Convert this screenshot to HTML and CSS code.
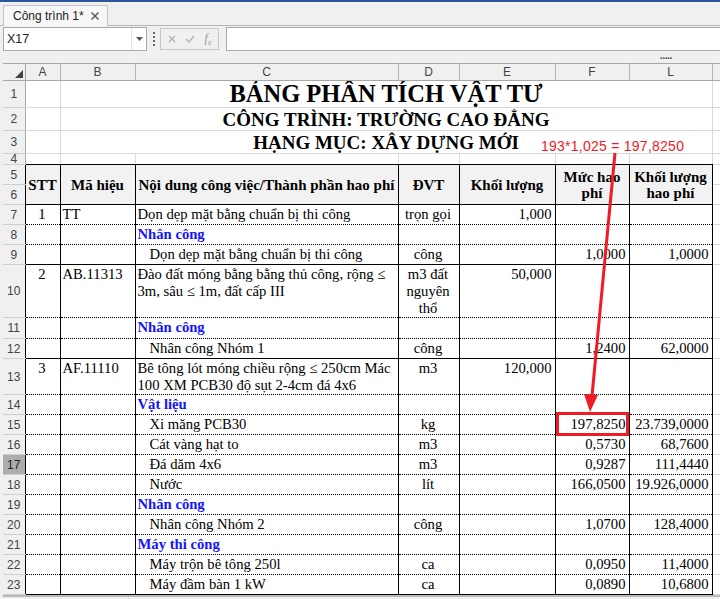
FILE: index.html
```html
<!DOCTYPE html>
<html lang="vi">
<head>
<meta charset="utf-8">
<title>Công trình 1*</title>
<link rel="stylesheet" href="styles.css">
</head>
<body>
<div class="app">
  <div class="topline"></div>
  <div class="tabbar">
    <div class="tab">
      <span class="tab-label">Công trình 1*</span>
      <svg class="tab-close" width="8" height="8" viewBox="0 0 8 8"><path d="M0.5 0.5 L7.5 7.5 M7.5 0.5 L0.5 7.5" stroke="#555" stroke-width="1.4"/></svg>
    </div>
  </div>
  <div class="fbar">
    <div class="namebox">
      <span class="name">X17</span>
      <span class="drop"><svg width="7" height="4" viewBox="0 0 7 4"><path d="M0 0 H7 L3.5 4 Z" fill="#555"/></svg></span>
    </div>
    <div class="grip"><i></i><i></i><i></i><i></i></div>
    <div class="fbtns">
      <svg width="8" height="8" viewBox="0 0 8 8"><path d="M1 1 L7 7 M7 1 L1 7" stroke="#b0b0b0" stroke-width="1.2"/></svg>
      <svg width="10" height="8" viewBox="0 0 10 8"><path d="M1 4 L4 7 L9 1" stroke="#b0b0b0" stroke-width="1.2" fill="none"/></svg>
      <span class="fx">f<sub>x</sub></span>
    </div>
    <div class="finput"></div>
  </div>
  <div class="strip"><span class="dots">.....</span></div>
  <div class="sheetwrap">
    <table class="sheet">
      <colgroup>
        <col class="c-rh"><col class="c-a"><col class="c-b"><col class="c-c"><col class="c-d"><col class="c-e"><col class="c-f"><col class="c-l"><col class="c-x">
      </colgroup>
      <thead>
        <tr class="colhdr">
          <th class="corner"><svg width="8" height="8" viewBox="0 0 8 8"><path d="M8 0 V8 H0 Z" fill="#444"/></svg></th>
          <th>A</th><th>B</th><th>C</th><th>D</th><th>E</th><th>F</th><th>L</th><th></th>
        </tr>
      </thead>
      <tbody>
        <tr class="h27"><th class="rh">1</th><td class="g"></td><td class="g title t1" colspan="6">BẢNG PHÂN TÍCH VẬT TƯ</td><td class="g"></td></tr>
        <tr class="h23"><th class="rh">2</th><td class="g"></td><td class="g title t2" colspan="6">CÔNG TRÌNH: TRƯỜNG CAO ĐẲNG</td><td class="g"></td></tr>
        <tr class="h23"><th class="rh">3</th><td class="g"></td><td class="g title t2" colspan="6">HẠNG MỤC: XÂY DỰNG MỚI</td><td class="g"></td></tr>
        <tr class="h11"><th class="rh">4</th><td class="g4"></td><td class="g4"></td><td class="g4"></td><td class="g4"></td><td class="g4"></td><td class="g4"></td><td class="g4"></td><td class="g"></td></tr>

        <tr class="h20 hd"><th class="rh rd">5</th>
          <td class="hc" rowspan="2">STT</td><td class="hc" rowspan="2">Mã hiệu</td><td class="hc" rowspan="2">Nội dung công việc/Thành phần hao phí</td><td class="hc" rowspan="2">ĐVT</td><td class="hc" rowspan="2">Khối lượng</td><td class="hc" rowspan="2">Mức hao<br>phí</td><td class="hc" rowspan="2">Khối lượng<br>hao phí</td><td class="g"></td></tr>
        <tr class="h20"><th class="rh rd">6</th><td class="g"></td></tr>

        <tr class="h20 dot"><th class="rh rd">7</th><td class="ctr">1</td><td>TT</td><td>Dọn dẹp mặt bằng chuẩn bị thi công</td><td class="ctr">trọn gọi</td><td class="num">1,000</td><td></td><td></td><td class="g"></td></tr>
        <tr class="h20 dot"><th class="rh rd">8</th><td></td><td></td><td class="grp">Nhân công</td><td></td><td></td><td></td><td></td><td class="g"></td></tr>
        <tr class="h20 sol"><th class="rh rd">9</th><td></td><td></td><td class="ind">Dọn dẹp mặt bằng chuẩn bị thi công</td><td class="ctr">công</td><td></td><td class="num">1,0000</td><td class="num">1,0000</td><td class="g"></td></tr>
        <tr class="h53 dot"><th class="rh rd">10</th><td class="ctr">2</td><td>AB.11313</td><td>Đào đất móng bằng bằng thủ công, rộng ≤<br>3m, sâu ≤ 1m, đất cấp III</td><td class="ctr">m3 đất<br>nguyên<br>thổ</td><td class="num">50,000</td><td></td><td></td><td class="g"></td></tr>
        <tr class="h21 dot"><th class="rh rd">11</th><td></td><td></td><td class="grp">Nhân công</td><td></td><td></td><td></td><td></td><td class="g"></td></tr>
        <tr class="h20 sol"><th class="rh rd">12</th><td></td><td></td><td class="ind">Nhân công Nhóm 1</td><td class="ctr">công</td><td></td><td class="num">1,2400</td><td class="num">62,0000</td><td class="g"></td></tr>
        <tr class="h36 dot"><th class="rh rd">13</th><td class="ctr">3</td><td>AF.11110</td><td>Bê tông lót móng chiều rộng ≤ 250cm Mác<br>100 XM PCB30 độ sụt 2-4cm đá 4x6</td><td class="ctr">m3</td><td class="num">120,000</td><td></td><td></td><td class="g"></td></tr>
        <tr class="h20 dot"><th class="rh rd">14</th><td></td><td></td><td class="grp">Vật liệu</td><td></td><td></td><td></td><td></td><td class="g"></td></tr>
        <tr class="h20 dot"><th class="rh rd">15</th><td></td><td></td><td class="ind">Xi măng PCB30</td><td class="ctr">kg</td><td></td><td class="num">197,8250</td><td class="num">23.739,0000</td><td class="g"></td></tr>
        <tr class="h20 dot"><th class="rh rd">16</th><td></td><td></td><td class="ind">Cát vàng hạt to</td><td class="ctr">m3</td><td></td><td class="num">0,5730</td><td class="num">68,7600</td><td class="g"></td></tr>
        <tr class="h20 dot"><th class="rh rd sel">17</th><td></td><td></td><td class="ind">Đá dăm 4x6</td><td class="ctr">m3</td><td></td><td class="num">0,9287</td><td class="num">111,4440</td><td class="g"></td></tr>
        <tr class="h20 dot"><th class="rh rd">18</th><td></td><td></td><td class="ind">Nước</td><td class="ctr">lít</td><td></td><td class="num">166,0500</td><td class="num">19.926,0000</td><td class="g"></td></tr>
        <tr class="h20 dot"><th class="rh rd">19</th><td></td><td></td><td class="grp">Nhân công</td><td></td><td></td><td></td><td></td><td class="g"></td></tr>
        <tr class="h20 dot"><th class="rh rd">20</th><td></td><td></td><td class="ind">Nhân công Nhóm 2</td><td class="ctr">công</td><td></td><td class="num">1,0700</td><td class="num">128,4000</td><td class="g"></td></tr>
        <tr class="h20 dot"><th class="rh rd">21</th><td></td><td></td><td class="grp">Máy thi công</td><td></td><td></td><td></td><td></td><td class="g"></td></tr>
        <tr class="h20 dot"><th class="rh rd">22</th><td></td><td></td><td class="ind">Máy trộn bê tông 250l</td><td class="ctr">ca</td><td></td><td class="num">0,0950</td><td class="num">11,4000</td><td class="g"></td></tr>
        <tr class="h20 sol"><th class="rh rd">23</th><td></td><td></td><td class="ind">Máy đầm bàn 1 kW</td><td class="ctr">ca</td><td></td><td class="num">0,0890</td><td class="num">10,6800</td><td class="g"></td></tr>
      </tbody>
    </table>
    <div class="sheetfoot"></div>
  </div>

  <div class="annot">193*1,025 = 197,8250</div>
  <svg class="arrow" width="720" height="599" viewBox="0 0 720 599">
    <path d="M615 153 L592 396" stroke="#ee1c24" stroke-width="3" fill="none"/>
    <path d="M584 394 L598 395 L590 412 Z" fill="#ee1c24"/>
  </svg>
  <div class="hilite"></div>
</div>
</body>
</html>
```

FILE: styles.css
```css
html, body {
  margin: 0;
  padding: 0;
}
body {
  width: 720px;
  height: 599px;
  overflow: hidden;
  background: #f0f0f0;
  font-family: "Liberation Sans", Arial, sans-serif;
}
.app {
  position: relative;
  width: 720px;
  height: 599px;
  overflow: hidden;
  background: #f0f0f0;
}
.topline {
  height: 2px;
  background: #2b579a;
}
.tabbar {
  height: 21px;
  padding: 2px 0 0 3px;
  border-bottom: 1px solid #b6b6b6;
  display: flex;
  align-items: flex-end;
}
.tab {
  width: 105px;
  height: 21px;
  margin-bottom: -1px;
  box-sizing: border-box;
  border: 1px solid #c4c4c4;
  border-bottom: none;
  background: #f7f7f7;
  display: flex;
  align-items: center;
  padding-left: 9px;
  font-size: 12px;
  color: #222;
}
.tab-label {
  flex: 1;
}
.tab-close {
  margin-right: 8px;
}
.fbar {
  height: 24px;
  padding: 1px 0 0 3px;
  display: flex;
  align-items: flex-start;
}
.namebox {
  width: 144px;
  height: 24px;
  box-sizing: border-box;
  border: 1px solid #a9a9a9;
  background: #fff;
  display: flex;
  align-items: center;
}
.name {
  flex: 1;
  padding-left: 3px;
  font-size: 12.5px;
  color: #222;
}
.drop {
  width: 14px;
  height: 22px;
  border-left: 1px solid #e2e2e2;
  display: flex;
  align-items: center;
  justify-content: center;
}
.grip {
  width: 13px;
  height: 24px;
  display: flex;
  flex-direction: column;
  align-items: center;
  justify-content: center;
  gap: 2px;
}
.grip i {
  display: block;
  width: 2px;
  height: 2px;
  background: #666;
}
.fbtns {
  margin-top: 1px;
  width: 59px;
  height: 22px;
  box-sizing: border-box;
  border: 1px solid #c9c9c9;
  display: flex;
  align-items: center;
  justify-content: space-around;
  padding: 0 2px;
}
.fx {
  font-family: "Liberation Serif", serif;
  font-style: italic;
  font-size: 12px;
  color: #999;
}
.fx sub {
  font-size: 8px;
}
.finput {
  margin-left: 7px;
  flex: 1;
  height: 24px;
  box-sizing: border-box;
  border: 1px solid #a9a9a9;
  border-right: none;
  background: #fff;
}
.strip {
  height: 12px;
  display: flex;
  justify-content: flex-end;
  padding-right: 48px;
}
.dots {
  font-size: 11px;
  line-height: 8px;
  letter-spacing: -0.6px;
  color: #555;
  font-weight: bold;
}
.sheetwrap {
  margin-left: 3px;
  height: 536px;
  overflow: hidden;
  background: #fff;
}
.sheet {
  border-collapse: collapse;
  table-layout: fixed;
  width: 789px;
  font-family: "Liberation Serif", "Times New Roman", serif;
  font-size: 14.67px;
  color: #000;
}
.c-rh { width: 22px; }
.c-a { width: 35px; }
.c-b { width: 75px; }
.c-c { width: 263px; }
.c-d { width: 61px; }
.c-e { width: 96px; }
.c-f { width: 74px; }
.c-l { width: 83px; }
.c-x { width: 80px; }

.colhdr {
  height: 17px;
}
.colhdr th {
  background: #f0f0f0;
  font-family: "Liberation Sans", Arial, sans-serif;
  font-weight: normal;
  font-size: 12px;
  line-height: 14px;
  color: #444;
  padding: 0;
  border-top: 1px solid #a8a8a8;
  border-bottom: 1px solid #a8a8a8;
  border-right: 1px solid #b4b4b4;
  text-align: center;
  vertical-align: middle;
}
.colhdr th.corner {
  text-align: right;
  vertical-align: bottom;
  padding: 0 2px 2px 0;
  line-height: 0;
  border-right: 1px solid #a8a8a8;
}
.rh {
  background: #f0f0f0;
  font-family: "Liberation Sans", Arial, sans-serif;
  font-weight: normal;
  font-size: 12px;
  line-height: 10px;
  color: #444;
  padding: 0;
  text-align: center;
  vertical-align: middle;
  border-right: 1px solid #a8a8a8;
  border-bottom: 1px solid #cfcfcf;
}
.rh.rd {
  border-right: 1px solid #000;
}
.rh.sel {
  background: #acacac;
  color: #222;
}
.h27 { height: 27px; }
.h23 { height: 23px; }
.h11 { height: 11px; }
.h20 { height: 20px; }
.h21 { height: 21px; }
.h36 { height: 36px; }
.h53 { height: 53px; }

.sheet td {
  padding: 1px 3px 0 2px;
  line-height: 17px;
  vertical-align: top;
  white-space: nowrap;
  overflow: hidden;
  border-right: 1px solid #000;
}
.dot td { border-bottom: 1px dotted #000; }
.sol td { border-bottom: 1px solid #000; }
.sheet td.g {
  border-right: 1px solid #d9d9d9;
  border-bottom: 1px solid #d9d9d9;
}
.sheet td.g4 {
  border-right: 1px solid #d9d9d9;
  border-bottom: 1px solid #000;
}
.sheet td.title {
  text-align: center;
  vertical-align: middle;
  font-weight: bold;
  padding: 0;
  line-height: 1;
}
.t1 { font-size: 24.5px; }
.t2 { font-size: 19px; }
.sheet td.hc {
  background: #f2f2f2;
  font-size: 15px;
  font-weight: bold;
  text-align: center;
  vertical-align: middle;
  line-height: 16px;
  padding: 0 2px;
  border-bottom: 1px solid #000;
}
.ctr { text-align: center; }
.num { text-align: right; }
.ind { padding-left: 14px !important; }
.grp {
  color: #1414ff;
  font-weight: bold;
}
.sheetfoot {
  height: 4px;
  border-top: 2px solid #b8b8b8;
  background: #f0f0f0;
}

.annot {
  position: absolute;
  left: 541px;
  top: 139px;
  font-family: "Liberation Sans", Arial, sans-serif;
  font-size: 14px;
  letter-spacing: 0.25px;
  line-height: 15px;
  color: #ee1c24;
  white-space: nowrap;
}
.arrow {
  position: absolute;
  left: 0;
  top: 0;
  pointer-events: none;
}
.hilite {
  position: absolute;
  left: 556px;
  top: 412px;
  width: 73px;
  height: 24px;
  box-sizing: border-box;
  border: 3px solid #ee1c24;
}
```
